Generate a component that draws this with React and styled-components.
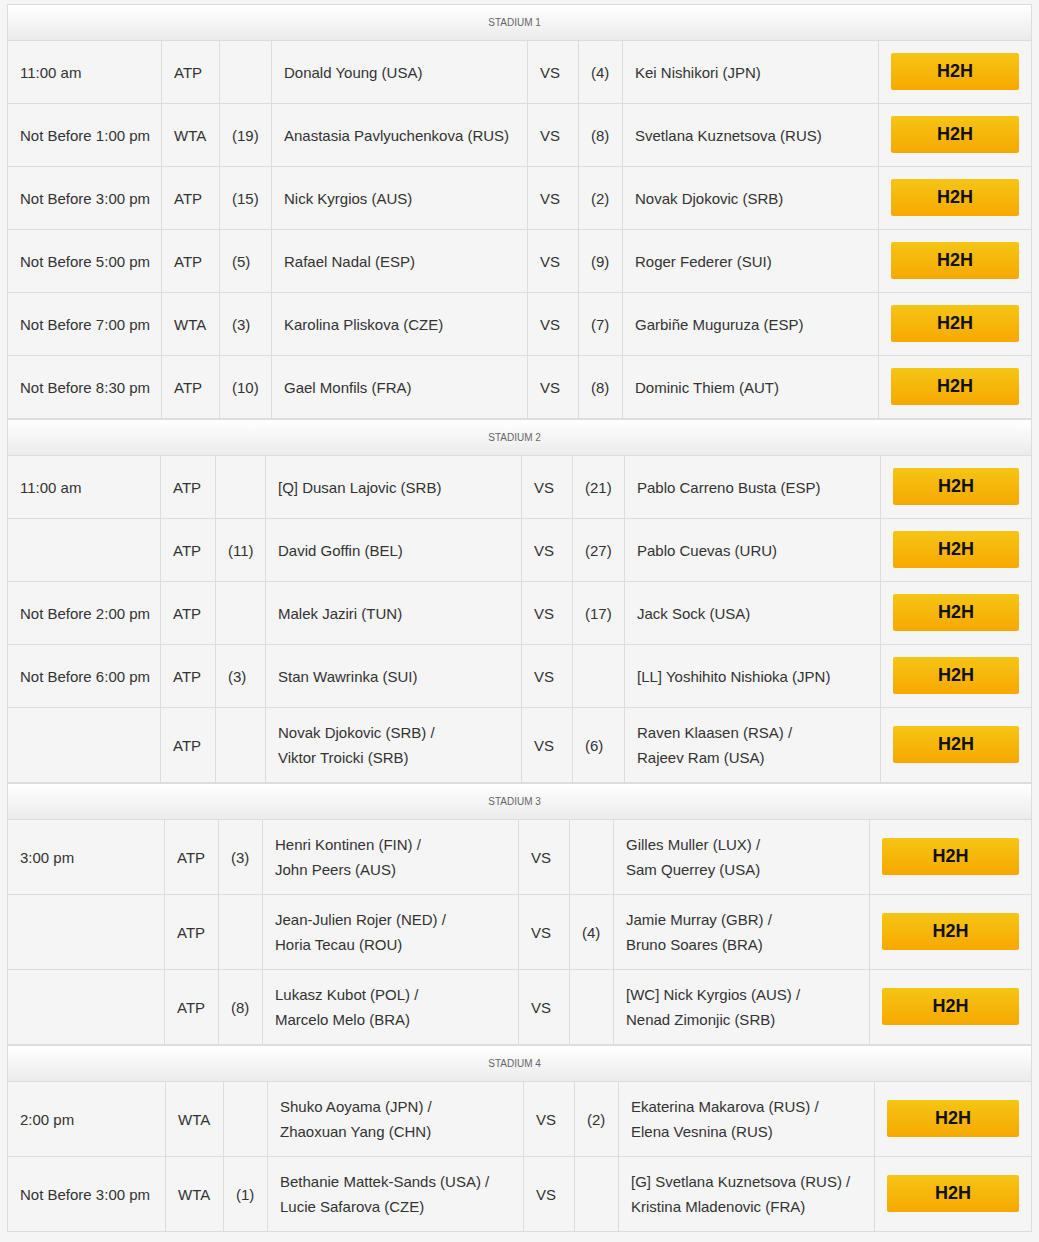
import React from 'react';
import styled, { createGlobalStyle } from 'styled-components';

const GlobalStyle = createGlobalStyle`
  body {
    margin: 0;
    background-color: #f5f5f5;
    font-family: "Liberation Sans", Arial, sans-serif;
    color: #333333;
  }
`;

const stadiums = [
  {
    name: 'Stadium 1',
    cols: [154, 58, 52, 256, 51, 44, 256, 153],
    matches: [
      { time: '11:00 am', tour: 'ATP', seedA: '', playerA: ['Donald Young (USA)'], seedB: '(4)', playerB: ['Kei Nishikori (JPN)'] },
      { time: 'Not Before 1:00 pm', tour: 'WTA', seedA: '(19)', playerA: ['Anastasia Pavlyuchenkova (RUS)'], seedB: '(8)', playerB: ['Svetlana Kuznetsova (RUS)'] },
      { time: 'Not Before 3:00 pm', tour: 'ATP', seedA: '(15)', playerA: ['Nick Kyrgios (AUS)'], seedB: '(2)', playerB: ['Novak Djokovic (SRB)'] },
      { time: 'Not Before 5:00 pm', tour: 'ATP', seedA: '(5)', playerA: ['Rafael Nadal (ESP)'], seedB: '(9)', playerB: ['Roger Federer (SUI)'] },
      { time: 'Not Before 7:00 pm', tour: 'WTA', seedA: '(3)', playerA: ['Karolina Pliskova (CZE)'], seedB: '(7)', playerB: ['Garbiñe Muguruza (ESP)'] },
      { time: 'Not Before 8:30 pm', tour: 'ATP', seedA: '(10)', playerA: ['Gael Monfils (FRA)'], seedB: '(8)', playerB: ['Dominic Thiem (AUT)'] },
    ],
  },
  {
    name: 'Stadium 2',
    cols: [153, 55, 50, 256, 51, 52, 256, 151],
    matches: [
      { time: '11:00 am', tour: 'ATP', seedA: '', playerA: ['[Q] Dusan Lajovic (SRB)'], seedB: '(21)', playerB: ['Pablo Carreno Busta (ESP)'] },
      { time: '', tour: 'ATP', seedA: '(11)', playerA: ['David Goffin (BEL)'], seedB: '(27)', playerB: ['Pablo Cuevas (URU)'] },
      { time: 'Not Before 2:00 pm', tour: 'ATP', seedA: '', playerA: ['Malek Jaziri (TUN)'], seedB: '(17)', playerB: ['Jack Sock (USA)'] },
      { time: 'Not Before 6:00 pm', tour: 'ATP', seedA: '(3)', playerA: ['Stan Wawrinka (SUI)'], seedB: '', playerB: ['[LL] Yoshihito Nishioka (JPN)'] },
      { time: '', tour: 'ATP', seedA: '', playerA: ['Novak Djokovic (SRB) /', 'Viktor Troicki (SRB)'], seedB: '(6)', playerB: ['Raven Klaasen (RSA) /', 'Rajeev Ram (USA)'] },
    ],
  },
  {
    name: 'Stadium 3',
    cols: [157, 54, 44, 256, 51, 44, 256, 162],
    matches: [
      { time: '3:00 pm', tour: 'ATP', seedA: '(3)', playerA: ['Henri Kontinen (FIN) /', 'John Peers (AUS)'], seedB: '', playerB: ['Gilles Muller (LUX) /', 'Sam Querrey (USA)'] },
      { time: '', tour: 'ATP', seedA: '', playerA: ['Jean-Julien Rojer (NED) /', 'Horia Tecau (ROU)'], seedB: '(4)', playerB: ['Jamie Murray (GBR) /', 'Bruno Soares (BRA)'] },
      { time: '', tour: 'ATP', seedA: '(8)', playerA: ['Lukasz Kubot (POL) /', 'Marcelo Melo (BRA)'], seedB: '', playerB: ['[WC] Nick Kyrgios (AUS) /', 'Nenad Zimonjic (SRB)'] },
    ],
  },
  {
    name: 'Stadium 4',
    cols: [158, 58, 44, 256, 51, 44, 256, 157],
    matches: [
      { time: '2:00 pm', tour: 'WTA', seedA: '', playerA: ['Shuko Aoyama (JPN) /', 'Zhaoxuan Yang (CHN)'], seedB: '(2)', playerB: ['Ekaterina Makarova (RUS) /', 'Elena Vesnina (RUS)'] },
      { time: 'Not Before 3:00 pm', tour: 'WTA', seedA: '(1)', playerA: ['Bethanie Mattek-Sands (USA) /', 'Lucie Safarova (CZE)'], seedB: '', playerB: ['[G] Svetlana Kuznetsova (RUS) /', 'Kristina Mladenovic (FRA)'] },
    ],
  },
];

const Page = styled.div`
  padding: 4px 7px 10px 7px;
`;

const ScheduleTable = styled.table`
  width: 1025px;
  table-layout: fixed;
  border-collapse: separate;
  border-spacing: 0;
  border-top: 1px solid #dddddd;
  border-left: 1px solid #dddddd;
`;

const Col = styled.col`
  width: ${(props) => props.$w}px;
`;

const HeaderCell = styled.th`
  height: 35px;
  padding: 0 10px 0 0;
  background: linear-gradient(to bottom, #ffffff 0%, #ebebeb 100%);
  border-right: 1px solid #dddddd;
  border-bottom: 1px solid #dddddd;
  font-size: 10px;
  font-weight: 400;
  color: #666666;
  text-transform: uppercase;
  text-align: center;
  vertical-align: middle;
`;

const Cell = styled.td`
  padding: 12px;
  border-right: 1px solid #dddddd;
  border-bottom: 1px solid #dddddd;
  font-size: 15px;
  line-height: 25px;
  color: #333333;
  text-align: left;
  vertical-align: middle;
  white-space: nowrap;
`;

const ButtonCell = styled(Cell)`
  padding-bottom: 13px;
`;

const Line = styled.div`
  line-height: 25px;
`;

const H2HButton = styled.a`
  display: block;
  width: 100%;
  height: 37px;
  line-height: 37px;
  border-radius: 2px;
  background: linear-gradient(to bottom, #f5c516 0%, #f7a800 100%);
  color: #111111;
  font-size: 18px;
  font-weight: 700;
  text-align: center;
  text-decoration: none;
  cursor: pointer;
`;

const Players = ({ names }) => (
  <>
    {names.map((n) => (
      <Line key={n}>{n}</Line>
    ))}
  </>
);

const MatchRow = ({ match }) => (
  <tr>
    <Cell>{match.time}</Cell>
    <Cell>{match.tour}</Cell>
    <Cell>{match.seedA}</Cell>
    <Cell>
      <Players names={match.playerA} />
    </Cell>
    <Cell>VS</Cell>
    <Cell>{match.seedB}</Cell>
    <Cell>
      <Players names={match.playerB} />
    </Cell>
    <ButtonCell>
      <H2HButton>H2H</H2HButton>
    </ButtonCell>
  </tr>
);

const StadiumTable = ({ stadium }) => (
  <ScheduleTable>
    <colgroup>
      {stadium.cols.map((w, i) => (
        <Col key={i} $w={w} />
      ))}
    </colgroup>
    <thead>
      <tr>
        <HeaderCell colSpan={8}>{stadium.name}</HeaderCell>
      </tr>
    </thead>
    <tbody>
      {stadium.matches.map((m, i) => (
        <MatchRow key={i} match={m} />
      ))}
    </tbody>
  </ScheduleTable>
);

export default function App() {
  return (
    <>
      <GlobalStyle />
      <Page>
        {stadiums.map((s) => (
          <StadiumTable key={s.name} stadium={s} />
        ))}
      </Page>
    </>
  );
}
